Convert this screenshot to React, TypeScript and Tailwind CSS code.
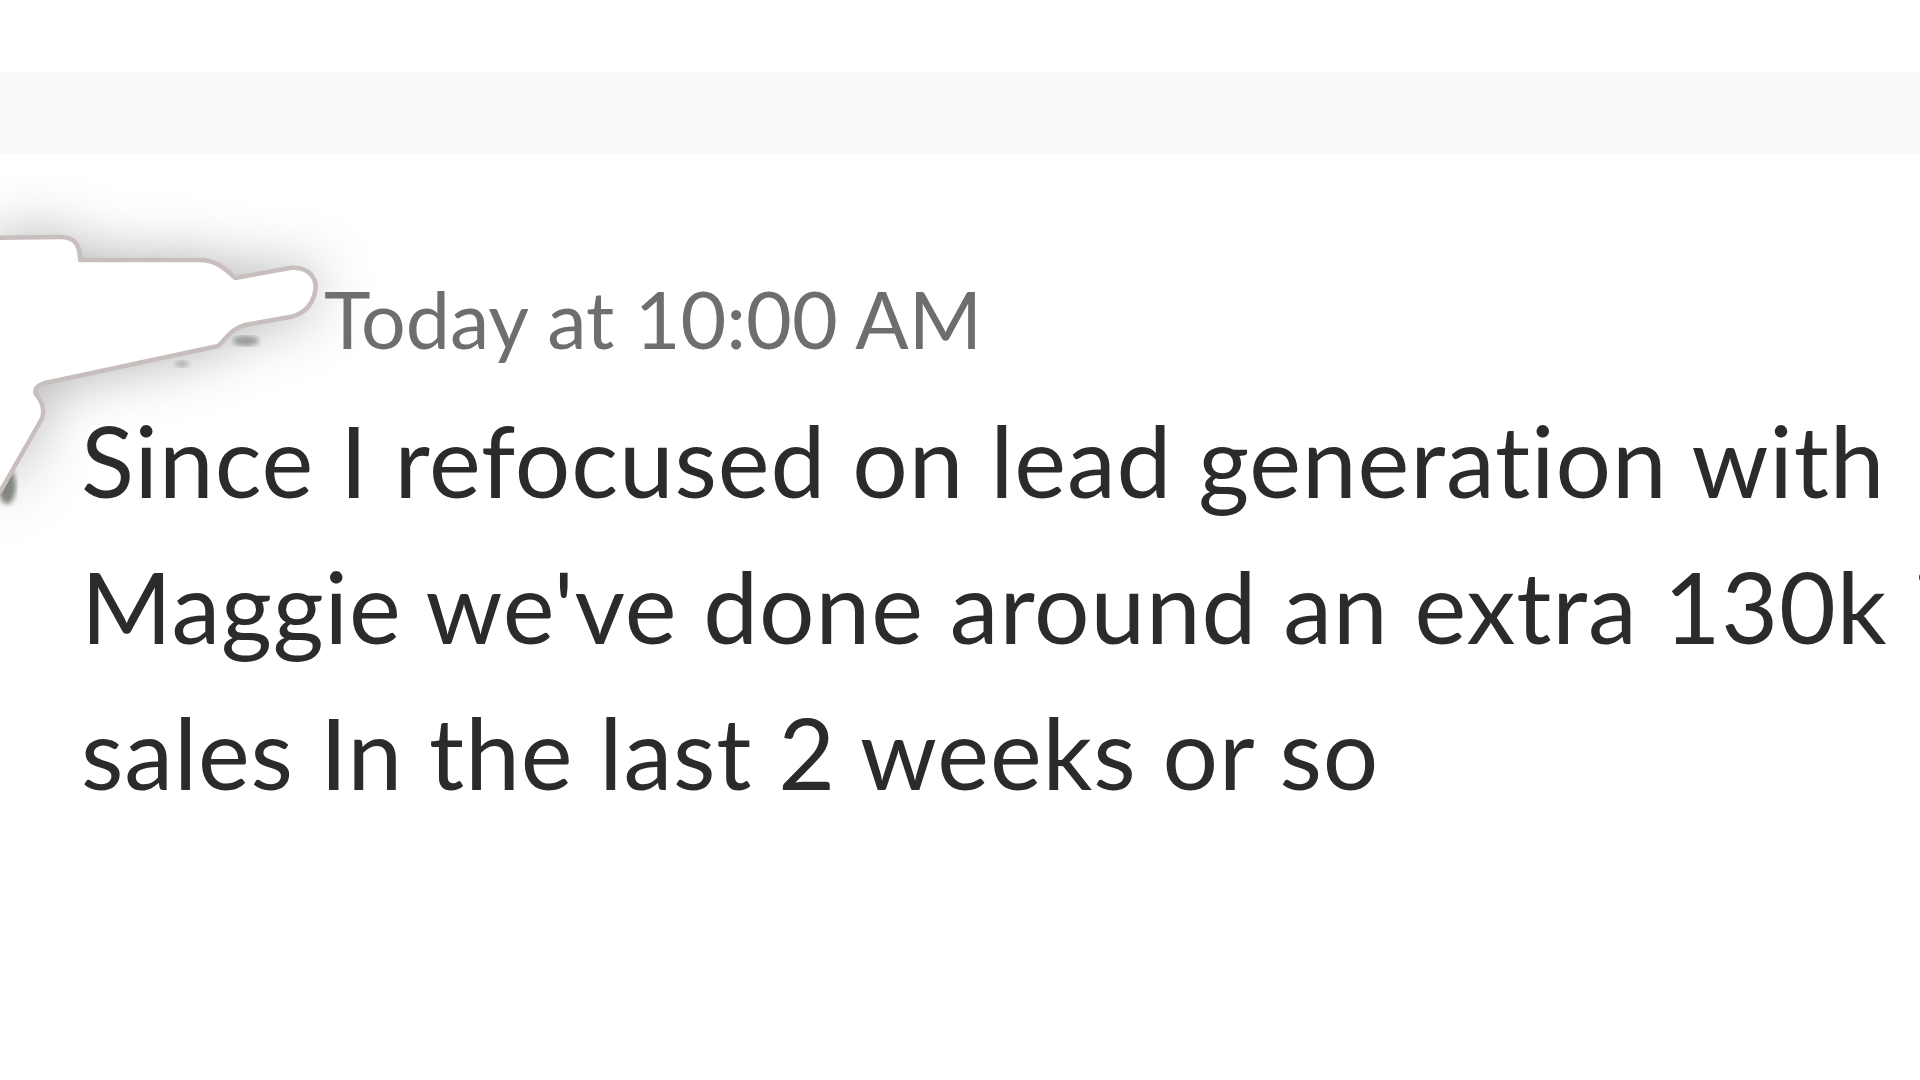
import React from 'react';

const lines = [
  'Since I refocused on lead generation with',
  "Maggie we've done around an extra 130k in",
  'sales In the last 2 weeks or so',
];

// white redaction blob drawn over the name / avatar
function Redaction() {
  const blob =
    'M -10 38 L 60 37 C 75 37 80 45 80 60 L 200 60 C 215 60 225 68 235 78 L 290 68 C 310 66 318 80 315 92 C 312 108 300 115 290 117 L 245 125 C 232 128 225 140 218 146 L 45 183 C 35 186 33 192 38 197 C 44 205 45 215 40 222 L 0 292 L -10 292 Z';
  return (
    <svg
      className="absolute left-0 top-[150px] pointer-events-none"
      width="480"
      height="420"
      viewBox="0 -50 480 420"
    >
      <defs>
        <filter id="soft" x="-50%" y="-50%" width="200%" height="200%">
          <feGaussianBlur stdDeviation="30" />
        </filter>
        <filter id="smudge">
          <feGaussianBlur stdDeviation="2.5" />
        </filter>
      </defs>
      <path d={blob} fill="#8a8a8a" opacity="0.7" filter="url(#soft)" />
      <ellipse cx="246" cy="141" rx="13" ry="5" fill="#6a6a6a" opacity="0.6" filter="url(#smudge)" />
      <ellipse cx="182" cy="164" rx="7" ry="3" fill="#777" opacity="0.5" filter="url(#smudge)" />
      <ellipse cx="7" cy="286" rx="9" ry="18" fill="#5d6458" opacity="0.75" filter="url(#smudge)" />
      <path d={blob} fill="#ffffff" stroke="#c9bebe" strokeWidth="4.5" strokeLinejoin="round" />
    </svg>
  );
}

export default function App() {
  return (
    <div
      className="relative w-[1920px] h-[1080px] overflow-hidden bg-white"
      style={{ fontFamily: 'Lato, "Open Sans", sans-serif' }}
    >
      <div className="h-[72px] bg-white" />
      <div className="h-[81px] bg-[#f9f9f9]" />
      <div className="pl-[81px]">
        <div className="mt-[126px] pl-[243px] text-[79px] leading-[80px] text-[#6e6e6e] whitespace-nowrap">
          Today at 10:00 AM
        </div>
        <div className="mt-[28px] text-[98px] leading-[146px] tracking-[0.9px] text-[#2b2b2b]">
          {lines.map((l) => (
            <div key={l} className="whitespace-nowrap">
              {l}
            </div>
          ))}
        </div>
      </div>
      <Redaction />
    </div>
  );
}
